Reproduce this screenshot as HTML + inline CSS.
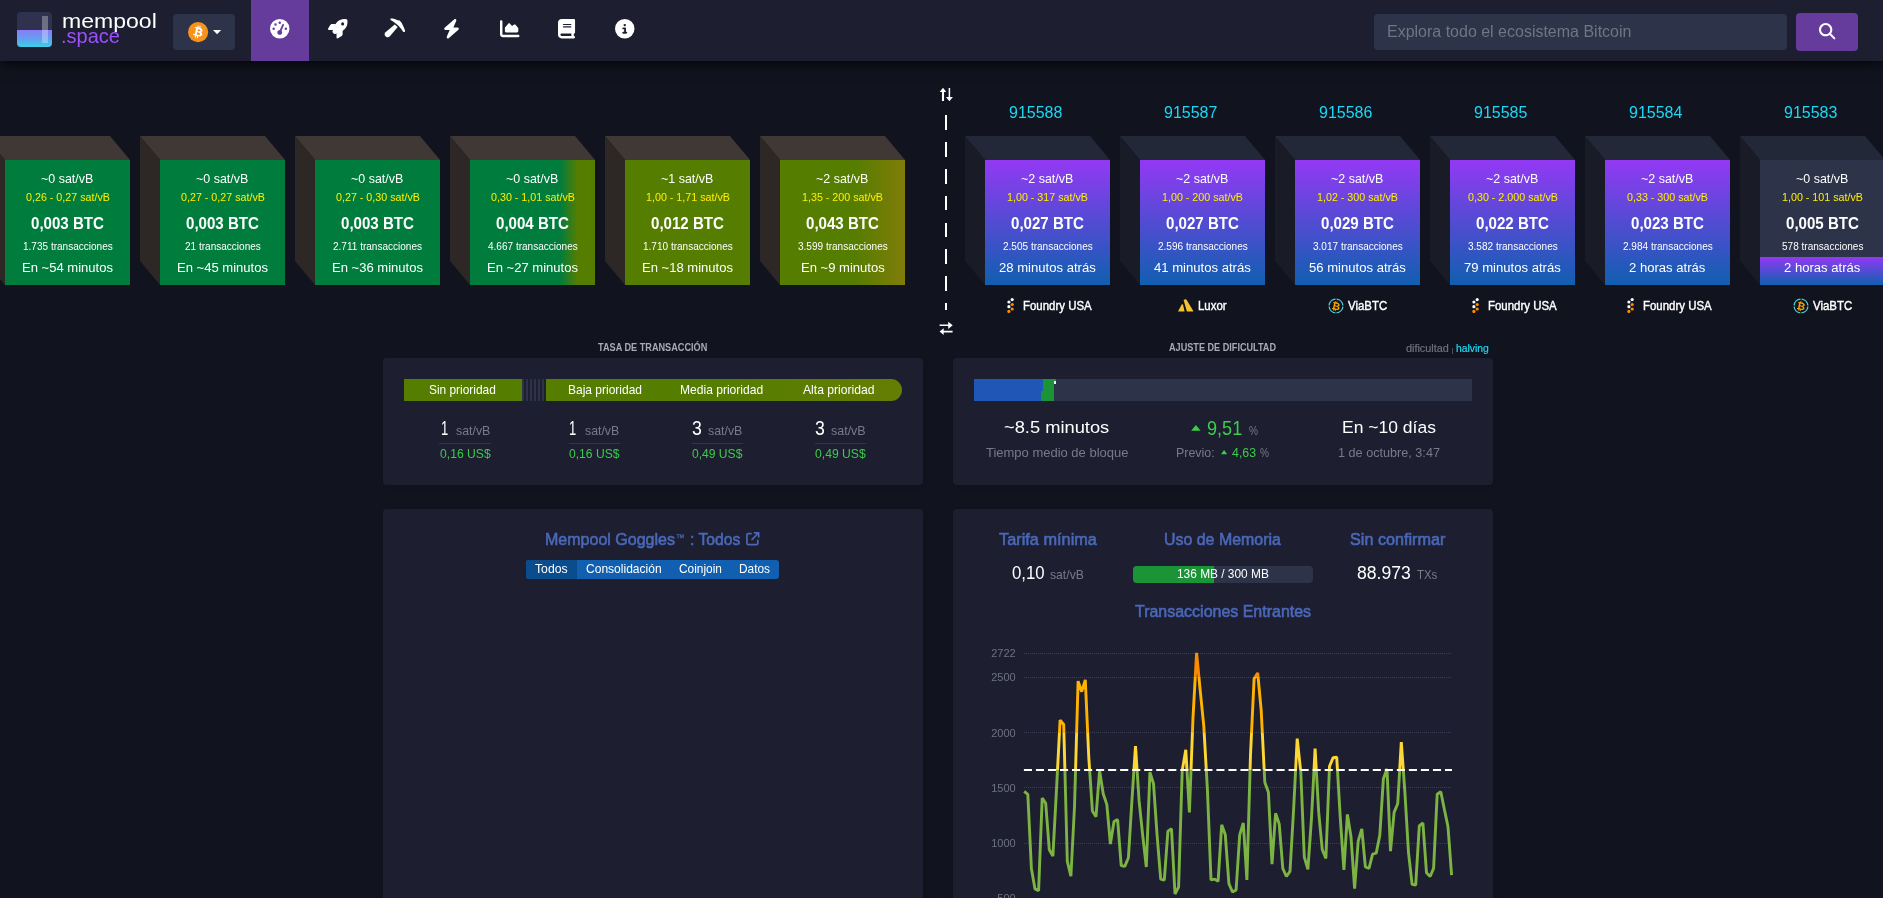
<!DOCTYPE html>
<html lang="es">
<head>
<meta charset="utf-8">
<title>mempool - Bitcoin Explorer</title>
<style>
*{box-sizing:border-box;margin:0;padding:0}
html,body{width:1883px;height:898px;overflow:hidden;background:#11131f}
body{position:relative;font-family:"Liberation Sans",sans-serif;color:#fff}
.t{position:absolute;white-space:nowrap;line-height:1em;transform-origin:0 0;display:block}
.abs{position:absolute}
nav{position:absolute;left:0;top:0;width:1883px;height:61px;background:#1d1f31;box-shadow:0 0 15px 0 #000;z-index:5}
.card{position:absolute;background:#1d1f31;border-radius:4px;box-shadow:2px 2px 4px rgba(0,0,0,.075)}
.blk{position:absolute;width:125px;height:125px;top:160px}
.blk:after{content:"";position:absolute;width:125px;height:24px;top:-24px;left:-20px;transform:skew(40deg);transform-origin:top}
.blk:before{content:"";position:absolute;width:20px;height:125px;top:-12px;left:-20px;transform:skewY(50deg);transform-origin:top}
.mp:after{background:#403834}
.mp:before{background:#2d2825}
.bc:after{background:#232838}
.bc:before{background:#191c27}
.bc{background:linear-gradient(to bottom,#9339f4 0%,#105fb0 100%)}
svg{position:absolute;overflow:visible}
</style>
</head>
<body>
<div id="app" style="position:absolute;left:0;top:0;width:1883px;height:898px;will-change:transform">
<nav>
<div class="abs" style="left:17px;top:12px;width:35px;height:35px;border-radius:4px;overflow:hidden;background:#2e324e">
<div class="abs" style="left:0;top:17.7px;width:35px;height:17.3px;background:linear-gradient(to bottom,#8a7bf7 0%,#5fa3ee 55%,#3ccfe9 100%)"></div>
<div class="abs" style="left:24.6px;top:4px;width:6.4px;height:27.3px;background:rgba(255,255,255,.3);border-radius:.5px"></div>
</div>
<span class="t" style="left:62.20px;top:9.10px;font-size:21px;line-height:23px;color:#fff;transform:scaleX(1.0970);">mempool</span>
<span class="t" style="left:61.30px;top:24.10px;font-size:21px;line-height:23px;color:#9b50fb;transform:scaleX(0.9524);">.space</span>
<div class="abs" style="left:173.3px;top:13.8px;width:61.6px;height:36.2px;border-radius:4px;background:#2d3348"></div>
<svg style="left:187.5px;top:21.5px" width="20.2" height="20.2" viewBox="0 0 64 64"><circle cx="32" cy="32" r="32" fill="#f7931a"/>
<path fill="#fff" d="M46.1 27.4c.6-4.300-2.600-6.500-7-8.100l1.400-5.700-3.500-.9-1.400 5.600c-.9-.2-1.900-.4-2.800-.7l1.400-5.600-3.500-.9-1.400 5.700c-.8-.2-1.500-.3-2.200-.5v0l-4.800-1.200-.9 3.700s2.600.6 2.500.6c1.400.4 1.700 1.300 1.600 2l-1.600 6.500c.1 0 .2.100.4.100l-.4-.1-2.300 9.100c-.2.400-.600 1.100-1.600.8 0 .1-2.500-.6-2.500-.6l-1.700 4 4.500 1.100c.8.200 1.700.400 2.500.6l-1.400 5.800 3.500.9 1.400-5.700c1 .3 1.900.5 2.800.7l-1.400 5.700 3.500.9 1.400-5.800c6 1.100 10.400.7 12.300-4.700 1.500-4.300-.1-6.800-3.200-8.500 2.300-.5 4-2 4.500-5.100zm-8 11.200c-1.100 4.300-8.400 2-10.800 1.400l1.900-7.700c2.400.6 10 1.800 8.900 6.300zm1.100-11.300c-1 3.900-7.100 1.900-9 1.500l1.700-7c2 .5 8.300 1.400 7.300 5.500z"/></svg>
<svg style="left:213px;top:30px" width="8.2" height="4.3" viewBox="0 0 8.2 4.3"><path d="M0 0h8.2L4.100 4.300z" fill="#fff"/></svg>
<div class="abs" style="left:250.8px;top:0;width:58.3px;height:61px;background:#653b9c"></div>
<svg style="left:270.05px;top:18.75px" width="19.50" height="19.50" viewBox="0 0 512 512"><path fill="#fff" d="M0 256a256 256 0 1 1 512 0A256 256 0 1 1 0 256zM288 96a32 32 0 1 0 -64 0 32 32 0 1 0 64 0zM256 416c35.300 0 64-28.700 64-64c0-17.400-6.900-33.100-18.100-44.600L366 161.700c5.300-12.100-.2-26.300-12.300-31.600s-26.300 .2-31.600 12.300L257.900 288c-.6 0-1.300 0-1.900 0c-35.300 0-64 28.700-64 64s28.700 64 64 64zM176 144a32 32 0 1 0 -64 0 32 32 0 1 0 64 0zM96 288a32 32 0 1 0 0-64 32 32 0 1 0 0 64zm352-32a32 32 0 1 0 -64 0 32 32 0 1 0 64 0z"/></svg>
<svg style="left:328.05px;top:18.55px" width="19.50" height="19.50" viewBox="0 0 512 512"><path fill="#fff" d="M156.600 384.900L125.700 354c-8.500-8.500-11.500-20.800-7.700-32.200c3-8.900 7-20.500 11.800-33.800L24 288c-8.600 0-16.600-4.600-20.900-12.100s-4.200-16.700 .2-24.100l52.500-88.500c13-21.900 36.500-35.300 61.900-35.300l82.300 0c2.400-4 4.800-7.700 7.200-11.300C289.100-4.100 411.100-8.100 483.900 5.300c11.600 2.100 20.600 11.200 22.800 22.800c13.400 72.900 9.300 194.800-111.400 276.700c-3.500 2.400-7.300 4.800-11.300 7.200v82.300c0 25.400-13.400 49-35.300 61.900l-88.500 52.500c-7.400 4.400-16.600 4.500-24.100 .2s-12.100-12.200-12.100-20.900V380.800c-14.100 4.900-26.400 8.900-35.700 11.900c-11.200 3.600-23.400 .5-31.800-7.800zM384 168a40 40 0 1 0 0-80 40 40 0 1 0 0 80z"/></svg>
<svg style="left:384.4px;top:17.4px" width="22" height="22" viewBox="0 0 22 22">
<path fill="#fff" d="M10.700 7.500L13.700 9.900L5.900 19.200A2.900 2.900 0 0 1 1.500 15.300z"/>
<path fill="#fff" d="M6.800 1.600C9 1.500 11.500 2.200 13.500 3.200L15.600 3.400C16.500 4.100 17.200 4.900 17.700 5.900C19.200 8.500 20.300 11.200 21.200 14.100L20.600 14.900L19.300 14.900C17.900 12.700 16.300 10.700 14.700 9.100C12.500 6.900 10 4.900 6.700 2.900C6.300 2.500 6.300 1.900 6.800 1.600z"/>
</svg>
<svg style="left:443.07px;top:18.65px" width="17.06" height="19.50" viewBox="0 0 448 512"><path fill="#fff" d="M349.400 44.600c5.900-13.700 1.500-29.700-10.600-38.500s-28.600-8-39.900 1.800l-256 224c-10 8.800-13.600 22.900-8.900 35.300S50.700 288 64 288H175.500L98.600 467.400c-5.900 13.700-1.500 29.700 10.600 38.500s28.600 8 39.900-1.800l256-224c10-8.800 13.600-22.900 8.900-35.300s-16.600-20.700-30-20.700H272.500L349.400 44.600z"/></svg>
<svg style="left:499.85px;top:18.75px" width="19.50" height="19.50" viewBox="0 0 512 512"><path fill="#fff" d="M64 64c0-17.700-14.300-32-32-32S0 46.300 0 64V400c0 44.200 35.800 80 80 80H480c17.700 0 32-14.300 32-32s-14.300-32-32-32H80c-8.800 0-16-7.200-16-16V64zm96 288H448c17.700 0 32-14.300 32-32V251.800c0-7.600-2.700-15-7.700-20.800l-65.800-76.800c-12.100-14.200-33.700-15-46.900-1.800l-21 21c-10 10-26.400 9.200-35.400-1.600l-39.200-47c-12.600-15.100-35.700-15.400-48.700-.6L135.900 215c-5.100 5.800-7.900 13.300-7.900 21.100v84c0 17.700 14.300 32 32 32z"/></svg>
<svg style="left:557.97px;top:18.75px" width="17.06" height="19.50" viewBox="0 0 448 512"><path fill="#fff" d="M96 0C43 0 0 43 0 96V416c0 53 43 96 96 96H384h32c17.700 0 32-14.300 32-32s-14.300-32-32-32V384c17.700 0 32-14.300 32-32V32c0-17.700-14.300-32-32-32H384 96zm0 384H352v64H96c-17.700 0-32-14.300-32-32s14.300-32 32-32zm32-240c0-8.800 7.200-16 16-16H336c8.800 0 16 7.200 16 16s-7.200 16-16 16H144c-8.800 0-16-7.200-16-16zm16 48H336c8.800 0 16 7.200 16 16s-7.200 16-16 16H144c-8.800 0-16-7.200-16-16s7.200-16 16-16z"/></svg>
<svg style="left:614.85px;top:18.75px" width="19.50" height="19.50" viewBox="0 0 512 512"><path fill="#fff" d="M256 512A256 256 0 1 0 256 0a256 256 0 1 0 0 512zM216 336h24V272H216c-13.300 0-24-10.700-24-24s10.700-24 24-24h48c13.300 0 24 10.700 24 24v88h8c13.300 0 24 10.700 24 24s-10.700 24-24 24H216c-13.300 0-24-10.700-24-24s10.700-24 24-24zm40-208a32 32 0 1 1 0 64 32 32 0 1 1 0-64z"/></svg>
<div class="abs" style="left:1374px;top:14px;width:413px;height:36px;border-radius:4px;background:#2d3348"></div>
<span class="t" style="left:1386.60px;top:23.10px;font-size:16px;line-height:17px;color:#6e7684;transform:scaleX(0.9993);">Explora todo el ecosistema Bitcoin</span>
<div class="abs" style="left:1796px;top:12.8px;width:62px;height:38.3px;border-radius:4px;background:#653b9c"></div>
<svg style="left:1818.70px;top:22.80px" width="16.40" height="16.40" viewBox="0 0 512 512"><path fill="#fff" d="M416 208c0 45.900-14.900 88.300-40 122.700L502.600 457.400c12.500 12.500 12.500 32.800 0 45.300s-32.800 12.500-45.300 0L330.700 376c-34.400 25.200-76.800 40-122.700 40C93.100 416 0 322.900 0 208S93.100 0 208 0S416 93.100 416 208zM208 352a144 144 0 1 0 0-288 144 144 0 1 0 0 288z"/></svg>
</nav>
<section id="mempool-blocks">
<div class="blk mp" style="left:5px;background:#007d3d"></div>
<span class="t" style="left:41.35px;top:172.10px;font-size:12.2px;line-height:14px;color:#fff;transform:scaleX(1.0219);">~0 sat/vB</span>
<span class="t" style="left:25.50px;top:192.10px;font-size:10.3px;line-height:11px;color:#fff000;transform:scaleX(1.0402);">0,26 - 0,27 sat/vB</span>
<span class="t" style="left:31.00px;top:215.10px;font-size:15.6px;line-height:17px;color:#fff;transform:scaleX(0.9678);font-weight:700;">0,003 BTC</span>
<span class="t" style="left:22.60px;top:241.10px;font-size:10.3px;line-height:11px;color:#fff;transform:scaleX(0.9741);">1.735 transacciones</span>
<span class="t" style="left:22.00px;top:261.10px;font-size:12.3px;line-height:14px;color:#fff;transform:scaleX(1.0607);">En ~54 minutos</span>
<div class="blk mp" style="left:160px;background:#007d3d"></div>
<span class="t" style="left:196.35px;top:172.10px;font-size:12.2px;line-height:14px;color:#fff;transform:scaleX(1.0219);">~0 sat/vB</span>
<span class="t" style="left:180.50px;top:192.10px;font-size:10.3px;line-height:11px;color:#fff000;transform:scaleX(1.0402);">0,27 - 0,27 sat/vB</span>
<span class="t" style="left:186.00px;top:215.10px;font-size:15.6px;line-height:17px;color:#fff;transform:scaleX(0.9678);font-weight:700;">0,003 BTC</span>
<span class="t" style="left:184.57px;top:241.10px;font-size:10.3px;line-height:11px;color:#fff;transform:scaleX(0.9741);">21 transacciones</span>
<span class="t" style="left:177.00px;top:261.10px;font-size:12.3px;line-height:14px;color:#fff;transform:scaleX(1.0607);">En ~45 minutos</span>
<div class="blk mp" style="left:315px;background:#007d3d"></div>
<span class="t" style="left:351.35px;top:172.10px;font-size:12.2px;line-height:14px;color:#fff;transform:scaleX(1.0219);">~0 sat/vB</span>
<span class="t" style="left:335.50px;top:192.10px;font-size:10.3px;line-height:11px;color:#fff000;transform:scaleX(1.0402);">0,27 - 0,30 sat/vB</span>
<span class="t" style="left:341.00px;top:215.10px;font-size:15.6px;line-height:17px;color:#fff;transform:scaleX(0.9678);font-weight:700;">0,003 BTC</span>
<span class="t" style="left:332.98px;top:241.10px;font-size:10.3px;line-height:11px;color:#fff;transform:scaleX(0.9741);">2.711 transacciones</span>
<span class="t" style="left:332.00px;top:261.10px;font-size:12.3px;line-height:14px;color:#fff;transform:scaleX(1.0607);">En ~36 minutos</span>
<div class="blk mp" style="left:470px;background:linear-gradient(to right,#007d3d 0%,#007d3d 72%,#557d00 86%,#557d00 100%)"></div>
<span class="t" style="left:506.35px;top:172.10px;font-size:12.2px;line-height:14px;color:#fff;transform:scaleX(1.0219);">~0 sat/vB</span>
<span class="t" style="left:490.50px;top:192.10px;font-size:10.3px;line-height:11px;color:#fff000;transform:scaleX(1.0402);">0,30 - 1,01 sat/vB</span>
<span class="t" style="left:496.00px;top:215.10px;font-size:15.6px;line-height:17px;color:#fff;transform:scaleX(0.9678);font-weight:700;">0,004 BTC</span>
<span class="t" style="left:487.60px;top:241.10px;font-size:10.3px;line-height:11px;color:#fff;transform:scaleX(0.9741);">4.667 transacciones</span>
<span class="t" style="left:487.00px;top:261.10px;font-size:12.3px;line-height:14px;color:#fff;transform:scaleX(1.0607);">En ~27 minutos</span>
<div class="blk mp" style="left:625px;background:#557d00"></div>
<span class="t" style="left:661.35px;top:172.10px;font-size:12.2px;line-height:14px;color:#fff;transform:scaleX(1.0219);">~1 sat/vB</span>
<span class="t" style="left:645.50px;top:192.10px;font-size:10.3px;line-height:11px;color:#fff000;transform:scaleX(1.0402);">1,00 - 1,71 sat/vB</span>
<span class="t" style="left:651.00px;top:215.10px;font-size:15.6px;line-height:17px;color:#fff;transform:scaleX(0.9678);font-weight:700;">0,012 BTC</span>
<span class="t" style="left:642.60px;top:241.10px;font-size:10.3px;line-height:11px;color:#fff;transform:scaleX(0.9741);">1.710 transacciones</span>
<span class="t" style="left:642.00px;top:261.10px;font-size:12.3px;line-height:14px;color:#fff;transform:scaleX(1.0607);">En ~18 minutos</span>
<div class="blk mp" style="left:780px;background:linear-gradient(to right,#557d00 0%,#557d00 60%,#807d09 100%)"></div>
<span class="t" style="left:816.35px;top:172.10px;font-size:12.2px;line-height:14px;color:#fff;transform:scaleX(1.0219);">~2 sat/vB</span>
<span class="t" style="left:802.00px;top:192.10px;font-size:10.3px;line-height:11px;color:#fff000;transform:scaleX(1.0402);">1,35 - 200 sat/vB</span>
<span class="t" style="left:806.00px;top:215.10px;font-size:15.6px;line-height:17px;color:#fff;transform:scaleX(0.9678);font-weight:700;">0,043 BTC</span>
<span class="t" style="left:797.60px;top:241.10px;font-size:10.3px;line-height:11px;color:#fff;transform:scaleX(0.9741);">3.599 transacciones</span>
<span class="t" style="left:800.62px;top:261.10px;font-size:12.3px;line-height:14px;color:#fff;transform:scaleX(1.0607);">En ~9 minutos</span>
</section>
<div class="abs" style="left:945px;top:115px;width:2px;height:195px;background:repeating-linear-gradient(to bottom,#fff 0,#fff 14.8px,transparent 14.8px,transparent 26.9px)"></div>
<svg style="left:939px;top:87px" width="15" height="15" viewBox="0 0 15 15">
<path fill="#fff" d="M4 .8L7.300 5.100H5.050V14.100H2.950V5.100H.7z"/>
<path fill="#fff" d="M10.400 14.200L6.900 10H9.650V.9H11.150V10H13.900z"/></svg>
<svg style="left:939px;top:321px" width="15" height="15" viewBox="0 0 15 15">
<path fill="#fff" d="M13.700 4.300L9.200 .8V3.500H.6V5.100H9.200V7.900z"/>
<path fill="#fff" d="M.6 10.600L4.700 7.200V9.800H13.600V11.500H4.700V14.100z"/></svg>
<section id="blockchain-blocks">
<div class="blk bc" style="left:985px;"></div>
<span class="t" style="left:1008.60px;top:104.10px;font-size:16.0px;line-height:17px;color:#1bd8f4;transform:scaleX(0.9989);">915588</span>
<span class="t" style="left:1021.35px;top:172.10px;font-size:12.2px;line-height:14px;color:#fff;transform:scaleX(1.0219);">~2 sat/vB</span>
<span class="t" style="left:1007.00px;top:192.10px;font-size:10.3px;line-height:11px;color:#fff000;transform:scaleX(1.0402);">1,00 - 317 sat/vB</span>
<span class="t" style="left:1011.00px;top:215.10px;font-size:15.6px;line-height:17px;color:#fff;transform:scaleX(0.9678);font-weight:700;">0,027 BTC</span>
<span class="t" style="left:1002.60px;top:241.10px;font-size:10.3px;line-height:11px;color:#fff;transform:scaleX(0.9741);">2.505 transacciones</span>
<span class="t" style="left:999.10px;top:261.10px;font-size:12.3px;line-height:14px;color:#fff;transform:scaleX(1.0642);">28 minutos atrás</span>
<svg style="left:1007.0px;top:297.4px" width="8" height="16" viewBox="0 0 8 16"><circle cx="5.2" cy="2.6" r="1.600" fill="#fff"/><circle cx="1.9" cy="5.0" r="1.600" fill="#fff"/><circle cx="5.2" cy="7.5" r="1.600" fill="#ff8c00"/><circle cx="1.9" cy="9.7" r="1.600" fill="#fff"/><circle cx="5.2" cy="12.0" r="1.600" fill="#ff8c00"/><circle cx="1.9" cy="14.4" r="1.600" fill="#ff8c00"/></svg>
<span class="t" style="left:1023.15px;top:299.10px;font-size:12.4px;line-height:14px;color:#fff;transform:scaleX(0.9240);-webkit-text-stroke:0.4px #fff;">Foundry USA</span>
<div class="blk bc" style="left:1140px;"></div>
<span class="t" style="left:1163.60px;top:104.10px;font-size:16.0px;line-height:17px;color:#1bd8f4;transform:scaleX(0.9989);">915587</span>
<span class="t" style="left:1176.35px;top:172.10px;font-size:12.2px;line-height:14px;color:#fff;transform:scaleX(1.0219);">~2 sat/vB</span>
<span class="t" style="left:1162.00px;top:192.10px;font-size:10.3px;line-height:11px;color:#fff000;transform:scaleX(1.0402);">1,00 - 200 sat/vB</span>
<span class="t" style="left:1166.00px;top:215.10px;font-size:15.6px;line-height:17px;color:#fff;transform:scaleX(0.9678);font-weight:700;">0,027 BTC</span>
<span class="t" style="left:1157.60px;top:241.10px;font-size:10.3px;line-height:11px;color:#fff;transform:scaleX(0.9741);">2.596 transacciones</span>
<span class="t" style="left:1154.10px;top:261.10px;font-size:12.3px;line-height:14px;color:#fff;transform:scaleX(1.0642);">41 minutos atrás</span>
<svg style="left:1178.2px;top:298.4px" width="16" height="14" viewBox="0 0 16 14"><path fill="#f6c231" d="M0 13.600L3.700 6.600Q4.300 5.800 5 6.600L6.600 13.600z"/><path fill="#f6c231" d="M5.600 2.100L7.300 1.200Q8 1 8.400 1.600L15.300 13.100Q15.400 13.600 14.900 13.600H8.900z"/></svg>
<span class="t" style="left:1198.18px;top:299.10px;font-size:12.4px;line-height:14px;color:#fff;transform:scaleX(0.9240);-webkit-text-stroke:0.4px #fff;">Luxor</span>
<div class="blk bc" style="left:1295px;"></div>
<span class="t" style="left:1318.60px;top:104.10px;font-size:16.0px;line-height:17px;color:#1bd8f4;transform:scaleX(0.9989);">915586</span>
<span class="t" style="left:1331.35px;top:172.10px;font-size:12.2px;line-height:14px;color:#fff;transform:scaleX(1.0219);">~2 sat/vB</span>
<span class="t" style="left:1317.00px;top:192.10px;font-size:10.3px;line-height:11px;color:#fff000;transform:scaleX(1.0402);">1,02 - 300 sat/vB</span>
<span class="t" style="left:1321.00px;top:215.10px;font-size:15.6px;line-height:17px;color:#fff;transform:scaleX(0.9678);font-weight:700;">0,029 BTC</span>
<span class="t" style="left:1312.60px;top:241.10px;font-size:10.3px;line-height:11px;color:#fff;transform:scaleX(0.9741);">3.017 transacciones</span>
<span class="t" style="left:1309.10px;top:261.10px;font-size:12.3px;line-height:14px;color:#fff;transform:scaleX(1.0642);">56 minutos atrás</span>
<svg style="left:1328.1px;top:297.8px" width="16" height="16" viewBox="0 0 16 16"><circle cx="8" cy="8" r="6.900" fill="none" stroke="#4fd1d3" stroke-width="1.300" stroke-dasharray="9.600 1.200" stroke-dashoffset="-0.600" transform="rotate(-90 8 8)"/><text x="8.100" y="11.700" font-family="Liberation Sans" font-weight="700" font-size="10.200" fill="#f7a800" text-anchor="middle" transform="rotate(12 8 8)">₿</text></svg>
<span class="t" style="left:1347.88px;top:299.10px;font-size:12.4px;line-height:14px;color:#fff;transform:scaleX(0.9240);-webkit-text-stroke:0.4px #fff;">ViaBTC</span>
<div class="blk bc" style="left:1450px;"></div>
<span class="t" style="left:1473.60px;top:104.10px;font-size:16.0px;line-height:17px;color:#1bd8f4;transform:scaleX(0.9989);">915585</span>
<span class="t" style="left:1486.35px;top:172.10px;font-size:12.2px;line-height:14px;color:#fff;transform:scaleX(1.0219);">~2 sat/vB</span>
<span class="t" style="left:1467.53px;top:192.10px;font-size:10.3px;line-height:11px;color:#fff000;transform:scaleX(1.0402);">0,30 - 2.000 sat/vB</span>
<span class="t" style="left:1476.00px;top:215.10px;font-size:15.6px;line-height:17px;color:#fff;transform:scaleX(0.9678);font-weight:700;">0,022 BTC</span>
<span class="t" style="left:1467.60px;top:241.10px;font-size:10.3px;line-height:11px;color:#fff;transform:scaleX(0.9741);">3.582 transacciones</span>
<span class="t" style="left:1464.10px;top:261.10px;font-size:12.3px;line-height:14px;color:#fff;transform:scaleX(1.0642);">79 minutos atrás</span>
<svg style="left:1472.0px;top:297.4px" width="8" height="16" viewBox="0 0 8 16"><circle cx="5.2" cy="2.6" r="1.600" fill="#fff"/><circle cx="1.9" cy="5.0" r="1.600" fill="#fff"/><circle cx="5.2" cy="7.5" r="1.600" fill="#ff8c00"/><circle cx="1.9" cy="9.7" r="1.600" fill="#fff"/><circle cx="5.2" cy="12.0" r="1.600" fill="#ff8c00"/><circle cx="1.9" cy="14.4" r="1.600" fill="#ff8c00"/></svg>
<span class="t" style="left:1488.15px;top:299.10px;font-size:12.4px;line-height:14px;color:#fff;transform:scaleX(0.9240);-webkit-text-stroke:0.4px #fff;">Foundry USA</span>
<div class="blk bc" style="left:1605px;"></div>
<span class="t" style="left:1628.60px;top:104.10px;font-size:16.0px;line-height:17px;color:#1bd8f4;transform:scaleX(0.9989);">915584</span>
<span class="t" style="left:1641.35px;top:172.10px;font-size:12.2px;line-height:14px;color:#fff;transform:scaleX(1.0219);">~2 sat/vB</span>
<span class="t" style="left:1627.00px;top:192.10px;font-size:10.3px;line-height:11px;color:#fff000;transform:scaleX(1.0402);">0,33 - 300 sat/vB</span>
<span class="t" style="left:1631.00px;top:215.10px;font-size:15.6px;line-height:17px;color:#fff;transform:scaleX(0.9678);font-weight:700;">0,023 BTC</span>
<span class="t" style="left:1622.60px;top:241.10px;font-size:10.3px;line-height:11px;color:#fff;transform:scaleX(0.9741);">2.984 transacciones</span>
<span class="t" style="left:1629.31px;top:261.10px;font-size:12.3px;line-height:14px;color:#fff;transform:scaleX(1.0642);">2 horas atrás</span>
<svg style="left:1627.0px;top:297.4px" width="8" height="16" viewBox="0 0 8 16"><circle cx="5.2" cy="2.6" r="1.600" fill="#fff"/><circle cx="1.9" cy="5.0" r="1.600" fill="#fff"/><circle cx="5.2" cy="7.5" r="1.600" fill="#ff8c00"/><circle cx="1.9" cy="9.7" r="1.600" fill="#fff"/><circle cx="5.2" cy="12.0" r="1.600" fill="#ff8c00"/><circle cx="1.9" cy="14.4" r="1.600" fill="#ff8c00"/></svg>
<span class="t" style="left:1643.15px;top:299.10px;font-size:12.4px;line-height:14px;color:#fff;transform:scaleX(0.9240);-webkit-text-stroke:0.4px #fff;">Foundry USA</span>
<div class="blk bc" style="left:1760px;background:linear-gradient(to bottom,#2d3348 0%,#2d3348 77.500%,#9339f4 77.500%,#105fb0 100%)"></div>
<span class="t" style="left:1783.60px;top:104.10px;font-size:16.0px;line-height:17px;color:#1bd8f4;transform:scaleX(0.9989);">915583</span>
<span class="t" style="left:1796.35px;top:172.10px;font-size:12.2px;line-height:14px;color:#fff;transform:scaleX(1.0219);">~0 sat/vB</span>
<span class="t" style="left:1782.00px;top:192.10px;font-size:10.3px;line-height:11px;color:#fff000;transform:scaleX(1.0402);">1,00 - 101 sat/vB</span>
<span class="t" style="left:1786.00px;top:215.10px;font-size:15.6px;line-height:17px;color:#fff;transform:scaleX(0.9678);font-weight:700;">0,005 BTC</span>
<span class="t" style="left:1781.79px;top:241.10px;font-size:10.3px;line-height:11px;color:#fff;transform:scaleX(0.9741);">578 transacciones</span>
<span class="t" style="left:1784.31px;top:261.10px;font-size:12.3px;line-height:14px;color:#fff;transform:scaleX(1.0642);">2 horas atrás</span>
<svg style="left:1793.1px;top:297.8px" width="16" height="16" viewBox="0 0 16 16"><circle cx="8" cy="8" r="6.900" fill="none" stroke="#4fd1d3" stroke-width="1.300" stroke-dasharray="9.600 1.200" stroke-dashoffset="-0.600" transform="rotate(-90 8 8)"/><text x="8.100" y="11.700" font-family="Liberation Sans" font-weight="700" font-size="10.200" fill="#f7a800" text-anchor="middle" transform="rotate(12 8 8)">₿</text></svg>
<span class="t" style="left:1812.88px;top:299.10px;font-size:12.4px;line-height:14px;color:#fff;transform:scaleX(0.9240);-webkit-text-stroke:0.4px #fff;">ViaBTC</span>
</section>
<span class="t" style="left:598.00px;top:341.10px;font-size:10.6px;line-height:12px;color:#a9aab3;transform:scaleX(0.8640);font-weight:700;">TASA DE TRANSACCIÓN</span>
<span class="t" style="left:1169.00px;top:341.10px;font-size:10.6px;line-height:12px;color:#a9aab3;transform:scaleX(0.8606);font-weight:700;">AJUSTE DE DIFICULTAD</span>
<span class="t" style="left:1406.10px;top:342.10px;font-size:10.6px;line-height:12px;color:#70727f;transform:scaleX(1.0235);-webkit-text-stroke:0.2px #70727f;">dificultad</span>
<div class="abs" style="left:1452px;top:347.5px;width:1px;height:6.500px;background:#4b4e5e"></div>
<span class="t" style="left:1455.50px;top:342.10px;font-size:10.6px;line-height:12px;color:#1bd8f4;transform:scaleX(0.9791);-webkit-text-stroke:0.2px #1bd8f4;">halving</span>
<div class="card" style="left:383px;top:358px;width:539.5px;height:127px"></div>
<div class="abs" style="left:404px;top:379px;width:118px;height:22px;background:#557d00"></div>
<div class="abs" style="left:522px;top:379px;width:24px;height:22px;background:repeating-linear-gradient(to right,#2d3348 0,#2d3348 2px,#1d1f31 2px,#1d1f31 4px)"></div>
<div class="abs" style="left:546px;top:379px;width:356px;height:22px;border-radius:0 11px 11px 0;background:linear-gradient(to right,#557d00 0%,#557d00 50%,#657d03 100%)"></div>
<span class="t" style="left:429.30px;top:383.10px;font-size:12.6px;line-height:14px;color:#fff;transform:scaleX(0.9442);">Sin prioridad</span>
<span class="t" style="left:567.70px;top:383.10px;font-size:12.6px;line-height:14px;color:#fff;transform:scaleX(0.9519);">Baja prioridad</span>
<span class="t" style="left:680.30px;top:383.10px;font-size:12.6px;line-height:14px;color:#fff;transform:scaleX(0.9577);">Media prioridad</span>
<span class="t" style="left:802.90px;top:383.10px;font-size:12.6px;line-height:14px;color:#fff;transform:scaleX(0.9634);">Alta prioridad</span>
<span class="t" style="left:440.50px;top:416.10px;font-size:20.6px;line-height:23px;color:#fff;transform:scaleX(0.6298);">1</span>
<span class="t" style="left:456.00px;top:424.10px;font-size:12.2px;line-height:14px;color:#787a87;transform:scaleX(1.0143);">sat/vB</span>
<div class="abs" style="left:439.1px;top:442.6px;width:51.7px;height:1px;background:#33364b"></div>
<span class="t" style="left:439.70px;top:446.10px;font-size:12.9px;line-height:15px;color:#3bcc49;transform:scaleX(0.9425);">0,16 US$</span>
<span class="t" style="left:569.20px;top:416.10px;font-size:20.6px;line-height:23px;color:#fff;transform:scaleX(0.6298);">1</span>
<span class="t" style="left:585.20px;top:424.10px;font-size:12.2px;line-height:14px;color:#787a87;transform:scaleX(1.0084);">sat/vB</span>
<div class="abs" style="left:568.8px;top:442.6px;width:51.1px;height:1px;background:#33364b"></div>
<span class="t" style="left:568.80px;top:446.10px;font-size:12.9px;line-height:15px;color:#3bcc49;transform:scaleX(0.9406);">0,16 US$</span>
<span class="t" style="left:691.90px;top:416.10px;font-size:20.6px;line-height:23px;color:#fff;transform:scaleX(0.8572);">3</span>
<span class="t" style="left:707.90px;top:424.10px;font-size:12.2px;line-height:14px;color:#787a87;transform:scaleX(1.0143);">sat/vB</span>
<div class="abs" style="left:692.0px;top:442.6px;width:51.0px;height:1px;background:#33364b"></div>
<span class="t" style="left:691.90px;top:446.10px;font-size:12.9px;line-height:15px;color:#3bcc49;transform:scaleX(0.9369);">0,49 US$</span>
<span class="t" style="left:814.80px;top:416.10px;font-size:20.6px;line-height:23px;color:#fff;transform:scaleX(0.8572);">3</span>
<span class="t" style="left:830.80px;top:424.10px;font-size:12.2px;line-height:14px;color:#787a87;transform:scaleX(1.0231);">sat/vB</span>
<div class="abs" style="left:814.9px;top:442.6px;width:51.0px;height:1px;background:#33364b"></div>
<span class="t" style="left:814.80px;top:446.10px;font-size:12.9px;line-height:15px;color:#3bcc49;transform:scaleX(0.9425);">0,49 US$</span>
<div class="card" style="left:953px;top:358px;width:539.5px;height:127px"></div>
<div class="abs" style="left:974px;top:379px;width:498px;height:22px;background:#2d3348"></div>
<div class="abs" style="left:974px;top:379px;width:69px;height:12px;background:#2057b6"></div>
<div class="abs" style="left:974px;top:391px;width:67px;height:10px;background:#2057b6"></div>
<div class="abs" style="left:1043px;top:379px;width:11px;height:12px;background:#1a9436"></div><div class="abs" style="left:1054px;top:379px;width:2.200px;height:2px;background:#1a9436"></div>
<div class="abs" style="left:1041px;top:391px;width:13px;height:10px;background:#1a9436"></div>
<div class="abs" style="left:1054px;top:381px;width:2.200px;height:3.200px;background:#fff"></div>
<span class="t" style="left:1003.80px;top:418.10px;font-size:16.8px;line-height:19px;color:#fff;transform:scaleX(1.0901);">~8.5 minutos</span>
<span class="t" style="left:985.60px;top:445.10px;font-size:13.4px;line-height:15px;color:#787a87;transform:scaleX(0.9694);">Tiempo medio de bloque</span>
<svg style="left:1190.8px;top:424.6px" width="9.800" height="5.700" viewBox="0 0 10 6"><path d="M5 0L10 6H0z" fill="#3bcc49"/></svg>
<span class="t" style="left:1206.50px;top:416.10px;font-size:20.6px;line-height:23px;color:#3bcc49;transform:scaleX(0.8785);">9,51</span>
<span class="t" style="left:1249.00px;top:424.10px;font-size:12.2px;line-height:14px;color:#787a87;transform:scaleX(0.8289);">%</span>
<span class="t" style="left:1176.20px;top:445.10px;font-size:13.4px;line-height:15px;color:#787a87;transform:scaleX(0.9286);">Previo:</span>
<svg style="left:1221px;top:450.4px" width="6.200" height="4.300" viewBox="0 0 10 6" preserveAspectRatio="none"><path d="M5 0L10 6H0z" fill="#3bcc49"/></svg>
<span class="t" style="left:1232.10px;top:445.10px;font-size:13.4px;line-height:15px;color:#3bcc49;transform:scaleX(0.9247);">4,63</span>
<span class="t" style="left:1260.00px;top:445.10px;font-size:13.4px;line-height:15px;color:#787a87;transform:scaleX(0.7547);">%</span>
<span class="t" style="left:1341.50px;top:418.10px;font-size:16.8px;line-height:19px;color:#fff;transform:scaleX(1.0429);">En ~10 días</span>
<span class="t" style="left:1337.60px;top:445.10px;font-size:13.4px;line-height:15px;color:#787a87;transform:scaleX(0.9444);">1 de octubre, 3:47</span>
<div class="card" style="left:383px;top:509px;width:539.5px;height:400px"></div>
<span class="t" style="left:544.50px;top:530.10px;font-size:17.0px;line-height:19px;color:#4a68b9;transform:scaleX(0.9423);-webkit-text-stroke:0.6px #4a68b9;">Mempool Goggles</span>
<span class="t" style="left:676.00px;top:532.10px;font-size:9.5px;line-height:11px;color:#4a68b9;transform:scaleX(0.8842);-webkit-text-stroke:0.2px #4a68b9;">™</span>
<span class="t" style="left:689.80px;top:530.10px;font-size:17.0px;line-height:19px;color:#4a68b9;transform:scaleX(0.9214);-webkit-text-stroke:0.6px #4a68b9;">: Todos</span>
<svg style="left:746.4px;top:531.8px" width="13.6" height="13.4" viewBox="0 0 512 512"><path fill="#4a68b9" d="M320 0c-17.700 0-32 14.300-32 32s14.300 32 32 32h82.700L201.400 265.400c-12.500 12.500-12.500 32.800 0 45.300s32.800 12.500 45.300 0L448 109.300V192c0 17.700 14.300 32 32 32s32-14.300 32-32V32c0-17.700-14.300-32-32-32H320zM80 32C35.800 32 0 67.800 0 112V432c0 44.200 35.800 80 80 80H400c44.200 0 80-35.800 80-80V320c0-17.700-14.300-32-32-32s-32 14.300-32 32V432c0 8.800-7.200 16-16 16H80c-8.800 0-16-7.200-16-16V112c0-8.800 7.200-16 16-16H192c17.700 0 32-14.300 32-32s-14.300-32-32-32H80z"/></svg>
<div class="abs" style="left:526px;top:559.8px;width:253px;height:19.200px;border-radius:3px;background:#105fb0;overflow:hidden"><div class="abs" style="left:0;top:0;width:50.800px;height:19.200px;background:#0b4c8c"></div></div>
<span class="t" style="left:535.40px;top:561.10px;font-size:13.6px;line-height:15px;color:#fff;transform:scaleX(0.8978);">Todos</span>
<span class="t" style="left:585.50px;top:561.10px;font-size:13.6px;line-height:15px;color:#fff;transform:scaleX(0.8852);">Consolidación</span>
<span class="t" style="left:678.50px;top:561.10px;font-size:13.6px;line-height:15px;color:#fff;transform:scaleX(0.8726);">Coinjoin</span>
<span class="t" style="left:738.80px;top:561.10px;font-size:13.6px;line-height:15px;color:#fff;transform:scaleX(0.8705);">Datos</span>
<div class="card" style="left:953px;top:509px;width:539.5px;height:400px"></div>
<span class="t" style="left:999.00px;top:530.10px;font-size:17.0px;line-height:19px;color:#4a68b9;transform:scaleX(0.9600);-webkit-text-stroke:0.6px #4a68b9;">Tarifa mínima</span>
<span class="t" style="left:1163.70px;top:530.10px;font-size:17.0px;line-height:19px;color:#4a68b9;transform:scaleX(0.9368);-webkit-text-stroke:0.6px #4a68b9;">Uso de Memoria</span>
<span class="t" style="left:1349.50px;top:530.10px;font-size:17.0px;line-height:19px;color:#4a68b9;transform:scaleX(0.9518);-webkit-text-stroke:0.6px #4a68b9;">Sin confirmar</span>
<span class="t" style="left:1011.80px;top:562.10px;font-size:18.8px;line-height:21px;color:#fff;transform:scaleX(0.8915);">0,10</span>
<span class="t" style="left:1050.10px;top:568.10px;font-size:12.2px;line-height:14px;color:#787a87;transform:scaleX(0.9995);">sat/vB</span>
<div class="abs" style="left:1133px;top:566px;width:180px;height:17px;border-radius:4px;background:#2d3348;overflow:hidden"><div class="abs" style="left:0;top:0;width:81px;height:17px;background:#1a9436"></div></div>
<span class="t" style="left:1176.50px;top:567.10px;font-size:12.2px;line-height:14px;color:#fff;transform:scaleX(0.9751);">136 MB / 300 MB</span>
<span class="t" style="left:1357.20px;top:562.10px;font-size:18.8px;line-height:21px;color:#fff;transform:scaleX(0.9369);">88.973</span>
<span class="t" style="left:1416.80px;top:568.10px;font-size:12.2px;line-height:14px;color:#787a87;transform:scaleX(0.9302);">TXs</span>
<span class="t" style="left:1134.50px;top:602.10px;font-size:17.0px;line-height:19px;color:#4a68b9;transform:scaleX(0.9396);-webkit-text-stroke:0.6px #4a68b9;">Transacciones Entrantes</span>
<svg style="left:0;top:0" width="1883" height="898" viewBox="0 0 1883 898">
<defs><linearGradient id="vm" gradientUnits="userSpaceOnUse" x1="0" y1="640.0" x2="0" y2="900.0"><stop offset="0.0000" stop-color="#fb8c00"/><stop offset="0.1431" stop-color="#fb8c00"/><stop offset="0.1431" stop-color="#ffb300"/><stop offset="0.3565" stop-color="#ffb300"/><stop offset="0.3565" stop-color="#fdd835"/><stop offset="0.4985" stop-color="#fdd835"/><stop offset="0.4985" stop-color="#7cb342"/><stop offset="1.0000" stop-color="#7cb342"/></linearGradient></defs>
<line x1="1024" x2="1452" y1="653.5" y2="653.5" stroke="#3c3e53" stroke-width="1" stroke-dasharray="1 1" shape-rendering="crispEdges"/>
<line x1="1024" x2="1452" y1="677.5" y2="677.5" stroke="#3c3e53" stroke-width="1" stroke-dasharray="1 1" shape-rendering="crispEdges"/>
<line x1="1024" x2="1452" y1="732.5" y2="732.5" stroke="#3c3e53" stroke-width="1" stroke-dasharray="1 1" shape-rendering="crispEdges"/>
<line x1="1024" x2="1452" y1="787.5" y2="787.5" stroke="#3c3e53" stroke-width="1" stroke-dasharray="1 1" shape-rendering="crispEdges"/>
<line x1="1024" x2="1452" y1="843.5" y2="843.5" stroke="#3c3e53" stroke-width="1" stroke-dasharray="1 1" shape-rendering="crispEdges"/>
<line x1="1024" x2="1452" y1="898.5" y2="898.5" stroke="#3c3e53" stroke-width="1" stroke-dasharray="1 1" shape-rendering="crispEdges"/>
<polyline points="1024.2,791.4 1027.8,794.3 1031.4,868.4 1035.0,888.9 1038.6,890.6 1042.2,798.0 1045.7,803.2 1049.3,849.8 1052.9,856.1 1056.5,789.4 1060.1,720.2 1063.7,724.5 1067.3,861.3 1070.9,876.2 1074.5,806.7 1078.1,681.1 1081.7,691.7 1085.3,679.9 1088.8,757.8 1092.4,811.0 1096.0,816.7 1099.6,770.7 1103.2,793.7 1106.8,804.4 1110.4,844.0 1114.0,821.6 1117.6,819.6 1121.2,865.6 1124.8,866.4 1128.4,857.8 1131.9,800.9 1135.5,746.0 1139.1,800.9 1142.7,835.4 1146.3,867.0 1149.9,772.2 1153.5,783.7 1157.1,835.4 1160.7,879.1 1164.3,880.2 1167.9,831.1 1171.5,828.8 1175.0,894.0 1178.6,887.1 1182.2,770.7 1185.8,749.8 1189.4,812.4 1193.0,717.6 1196.6,652.9 1200.2,690.3 1203.8,726.2 1207.4,789.4 1211.0,879.9 1214.6,879.1 1218.1,881.4 1221.7,824.8 1225.3,834.8 1228.9,883.7 1232.5,892.0 1236.1,890.0 1239.7,834.8 1243.3,823.0 1246.9,879.9 1250.5,754.9 1254.1,678.8 1257.7,673.0 1261.2,710.4 1264.8,782.2 1268.4,792.3 1272.0,864.1 1275.6,813.3 1279.2,823.9 1282.8,868.4 1286.4,876.5 1290.0,871.3 1293.6,809.5 1297.2,738.6 1300.8,772.2 1304.3,857.0 1307.9,869.3 1311.5,818.2 1315.1,748.6 1318.7,812.4 1322.3,849.8 1325.9,858.4 1329.5,766.4 1333.1,757.8 1336.7,757.2 1340.3,818.2 1343.9,869.9 1347.4,814.4 1351.0,836.8 1354.6,888.6 1358.2,841.1 1361.8,828.8 1365.4,867.0 1369.0,868.4 1372.6,854.1 1376.2,853.2 1379.8,835.4 1383.4,778.8 1387.0,769.0 1390.5,851.2 1394.1,812.4 1397.7,803.8 1401.3,742.0 1404.9,792.3 1408.5,852.6 1412.1,884.3 1415.7,885.1 1419.3,825.9 1422.9,823.0 1426.5,872.8 1430.1,876.5 1433.6,868.4 1437.2,794.3 1440.8,791.7 1444.4,809.5 1448.0,826.8 1451.6,875.1" fill="none" stroke="url(#vm)" stroke-width="2.9" stroke-linejoin="bevel" stroke-linecap="butt"/>
<line x1="1023.9" x2="1452" y1="770" y2="770" stroke="#fff" stroke-width="2.2" stroke-dasharray="8.1 3.930"/>
</svg>
<span class="t" style="left:991.23px;top:647.10px;font-size:11.0px;line-height:12px;color:#6f7280;transform:scaleX(1.0000);">2722</span>
<span class="t" style="left:991.23px;top:671.10px;font-size:11.0px;line-height:12px;color:#6f7280;transform:scaleX(1.0000);">2500</span>
<span class="t" style="left:991.23px;top:727.10px;font-size:11.0px;line-height:12px;color:#6f7280;transform:scaleX(1.0000);">2000</span>
<span class="t" style="left:991.23px;top:782.10px;font-size:11.0px;line-height:12px;color:#6f7280;transform:scaleX(1.0000);">1500</span>
<span class="t" style="left:991.23px;top:837.10px;font-size:11.0px;line-height:12px;color:#6f7280;transform:scaleX(1.0000);">1000</span>
<span class="t" style="left:997.33px;top:892.10px;font-size:11.0px;line-height:12px;color:#6f7280;transform:scaleX(1.0000);">500</span>
</div>
</body>
</html>
